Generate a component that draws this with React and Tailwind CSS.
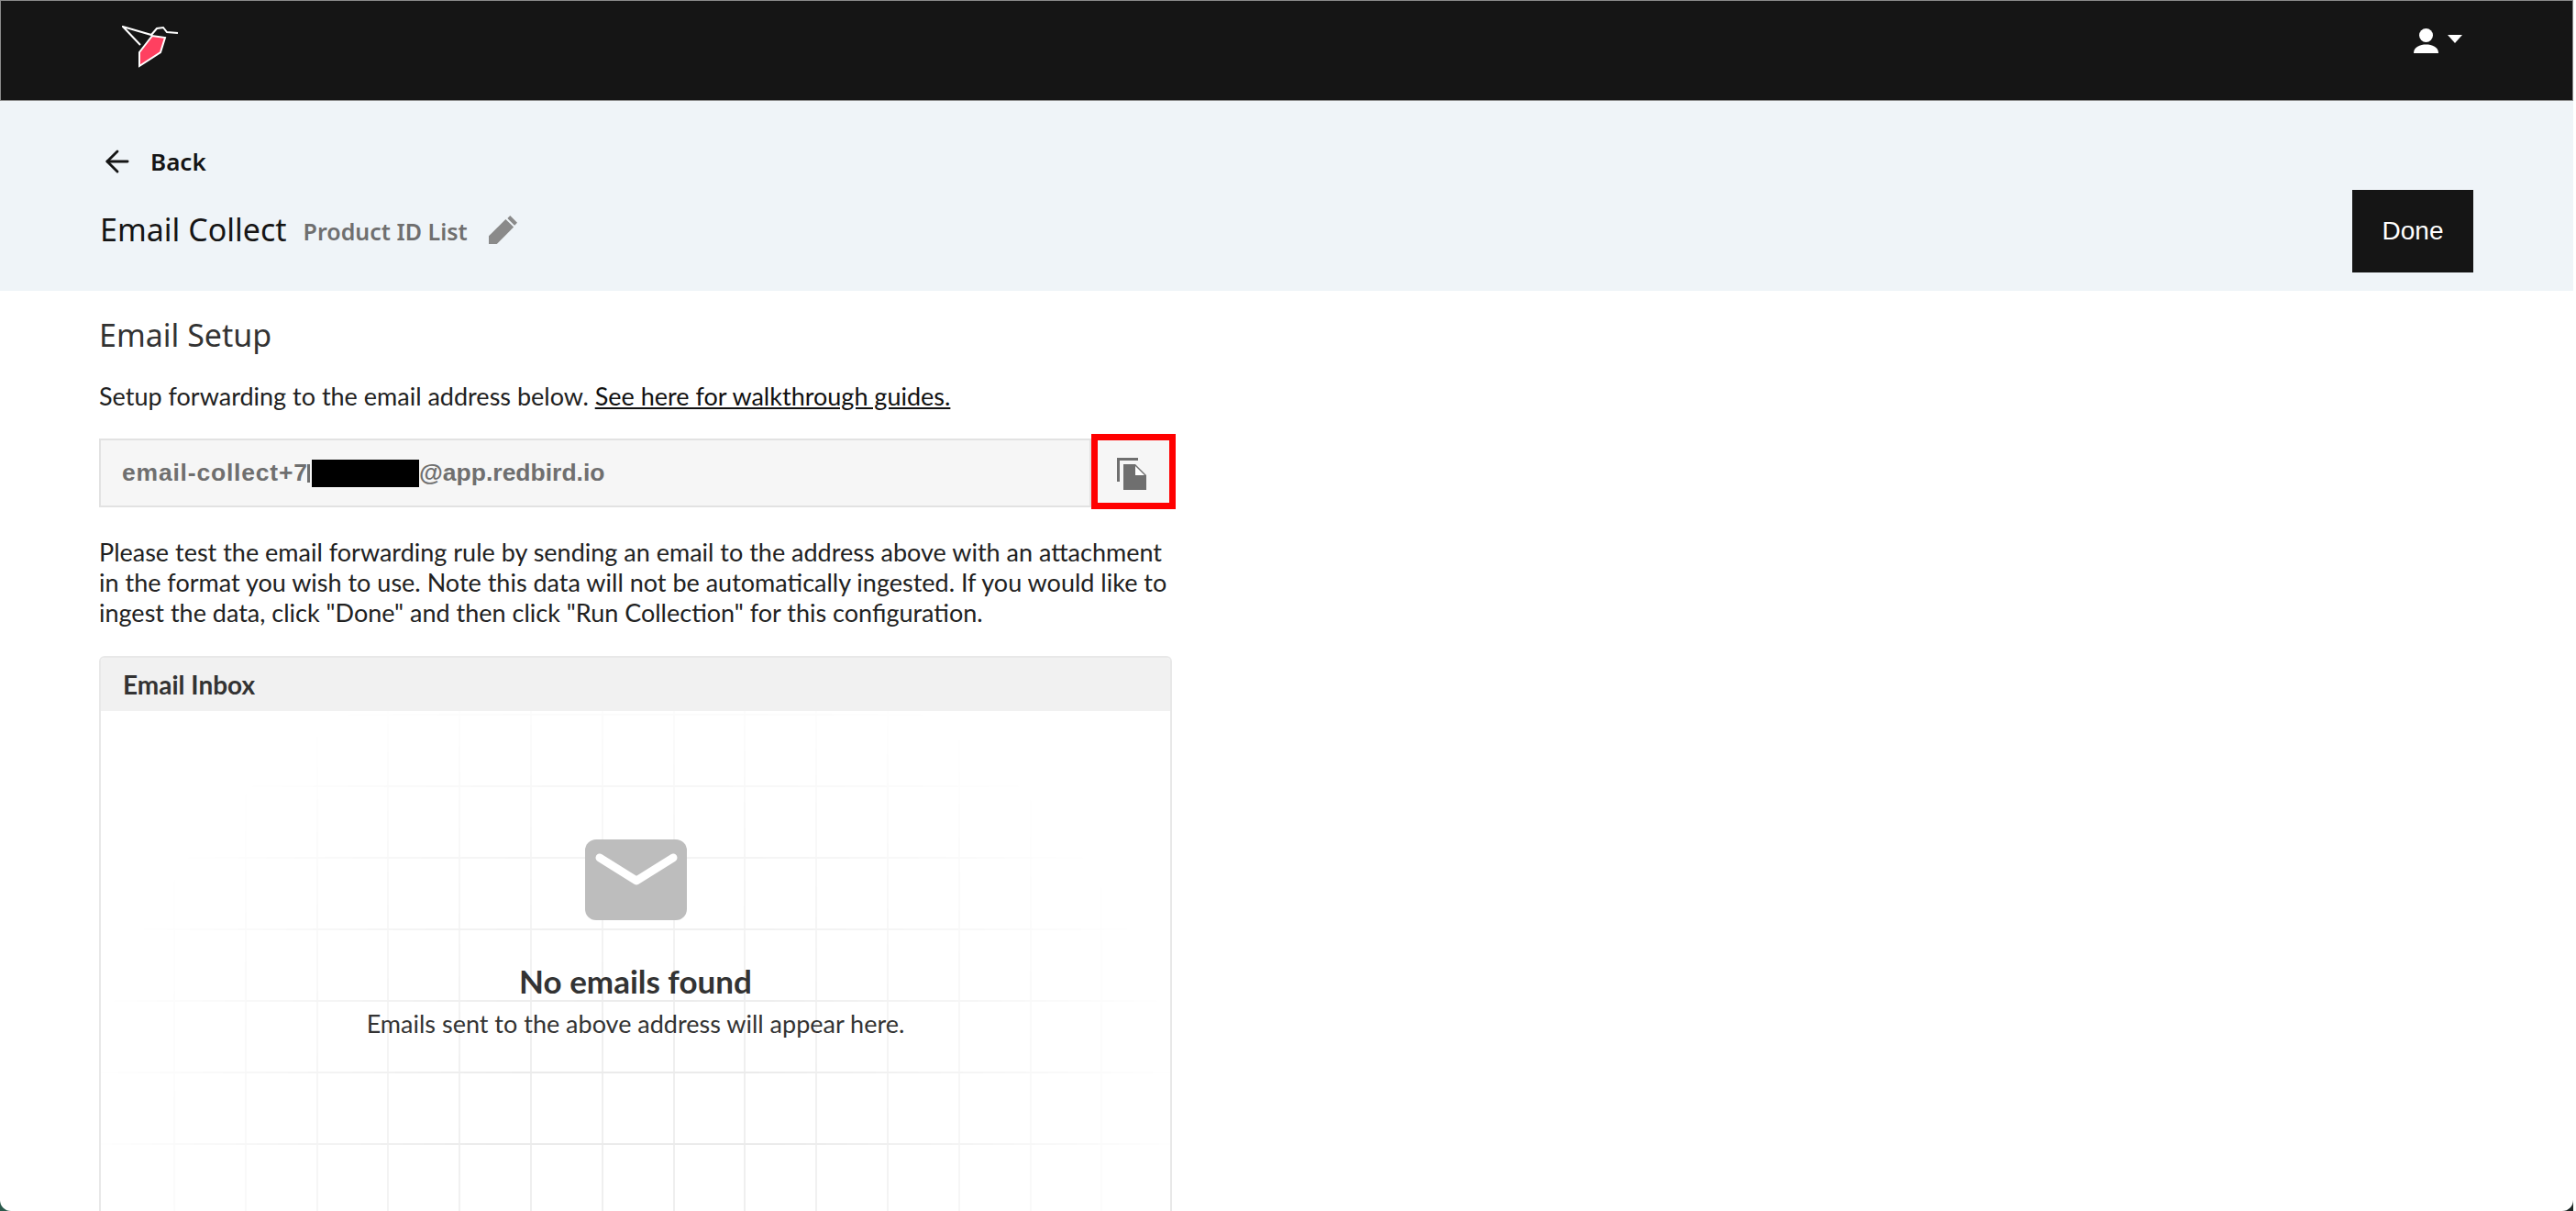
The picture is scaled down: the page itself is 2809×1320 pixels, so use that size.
import { ArrowLeft } from 'lucide-react';

const gridCols = Array.from({ length: 14 }, (_, i) => i);
const gridRows = Array.from({ length: 7 }, (_, i) => i);

function BirdLogo() {
    return (
        <svg width="62" height="46" viewBox="0 0 62 46" fill="none">
            <path d="M19 44 L19 29 L33 11 L47 13 L42 29 Z" fill="#ff4060" stroke="#fff" strokeWidth="2" />
            <path d="M20 21 L1 1 L32 10 L38 3 L45 2 L49 7 L61 8" stroke="#fff" strokeWidth="2" fill="none" />
        </svg>
    );
}

function CopyIcon() {
    return (
        <svg className="mr-[5px] mt-[4px]" width="32" height="35" viewBox="0 0 32 35">
            <path d="M0 0 H23 V3 H3 V26 H0 Z" fill="#6f6f6f" />
            <path d="M7 7 H20 L32 19 V35 H7 Z" fill="#6f6f6f" />
            <path d="M20 9 L30 19 H20 Z" fill="#fff" />
        </svg>
    );
}

function MailIcon() {
    return (
        <svg width="111" height="88" viewBox="0 0 111 88">
            <rect x="0" y="0" width="111" height="88" rx="12" fill="#bdbdbd" />
            <path d="M16 20 L56 45 L96 20" stroke="#fff" strokeWidth="9" strokeLinecap="round" strokeLinejoin="round" fill="none" />
        </svg>
    );
}

function GridBackdrop() {
    return (
        <div className="absolute inset-0 overflow-hidden [mask-image:radial-gradient(ellipse_52%_95%_at_50%_80%,black_25%,transparent_100%)]">
            <div className="absolute left-[79px] top-0 flex">
                {gridCols.map((i) => (
                    <div key={i} className="w-[77.8px] h-[600px] border-l-2 border-[#efefef]" />
                ))}
            </div>
            <div className="absolute left-0 right-0 top-[3px] flex flex-col">
                {gridRows.map((i) => (
                    <div key={i} className="h-[78px] border-t-2 border-[#ebebeb]" />
                ))}
            </div>
        </div>
    );
}

export default function App() {
    return (
        <div className="w-[2809px] h-[1320px] overflow-hidden bg-[linear-gradient(to_right,#2b5a4c_50%,#1c2624_50%,#1c2624_2806px,white_2806px)]">
            <div className="w-[2806px] h-[1320px] overflow-hidden rounded-b-[12px] bg-white font-['Lato',sans-serif] text-[#212121]">
                <nav className="h-[110px] bg-[#151515] border border-[#8a8a8a] flex items-start justify-between pl-[132px] pr-[120px]">
                    <div className="pt-[27px]">
                        <BirdLogo />
                    </div>
                    <div className="flex items-center gap-[10px] pt-[30px]">
                        <svg width="27" height="27" viewBox="0 0 27 27" fill="#fff">
                            <circle cx="13.5" cy="7.5" r="7.5" />
                            <path d="M0 27 C0 20 7 17.5 13.5 17.5 C20 17.5 27 20 27 27 Z" />
                        </svg>
                        <div className="mb-[4px] w-0 h-0 border-l-[8px] border-r-[8px] border-t-[9px] border-l-transparent border-r-transparent border-t-white" />
                    </div>
                </nav>

                <header className="h-[207px] bg-[#eff4f8] flex items-end justify-between pl-[108px] pr-[109px] pb-[20px]">
                    <div className="pb-[24px]">
                        <div className="flex items-center gap-[17px] h-[38px] pl-[1px] text-[#151515]">
                            <ArrowLeft size={38} strokeWidth={1.8} />
                            <span className="font-['Noto_Sans',sans-serif] text-[26px] font-semibold">Back</span>
                        </div>
                        <div className="flex items-center mt-[32px] pl-[1px]">
                            <span className="font-['Noto_Sans',sans-serif] text-[34px] leading-[46px] text-[#151515]">Email Collect</span>
                            <span className="ml-[18px] mt-[5px] font-['Noto_Sans',sans-serif] text-[25px] font-semibold text-[#6f6f6f]">Product ID List</span>
                            <svg className="ml-[23px]" width="31" height="31" viewBox="0 0 32 32" fill="#8a8a8a">
                                <path d="M0 32 V23 L19 4 L28 13 L9 32 Z" />
                                <path d="M21 3 L24 0 L32 8 L29 11 Z" />
                            </svg>
                        </div>
                    </div>
                    <button className="w-[132px] h-[90px] bg-[#151515] text-white text-[28px] font-['Liberation_Sans',sans-serif]">Done</button>
                </header>

                <main className="pl-[108px] w-[1282px]">
                    <h2 className="mt-[28px] font-['Noto_Sans',sans-serif] text-[34px] leading-[40px] text-[#333]">Email Setup</h2>
                    <p className="mt-[30px] text-[27px] leading-[33px]">
                        Setup forwarding to the email address below. <a className="underline text-[#111]">See here for walkthrough guides.</a>
                    </p>
                    <div className="mt-[30px] flex items-stretch h-[75px]">
                        <div className="flex-1 bg-[#f6f6f6] border-2 border-[#e2e2e2] flex items-center pl-[23px] font-['Liberation_Sans',sans-serif] font-bold text-[26.5px] text-[#6f6f6f]">
                            <span className="w-[202px] whitespace-nowrap tracking-[0.8px]">email-collect+7</span>
                            <span className="w-[5px] h-[20px] border-l-[3px] border-[#6f6f6f]" />
                            <span className="w-[117px] h-[30px] bg-black" />
                            <span>@app.redbird.io</span>
                        </div>
                        <div className="relative w-[92px]">
                            <div className="absolute left-0 right-0 -top-[5px] -bottom-[2px] border-[7px] border-[#ff0000] bg-[#f6f6f6] flex items-center justify-center">
                                <CopyIcon />
                            </div>
                        </div>
                    </div>
                    <p className="mt-[32px] text-[27px] leading-[33px] w-[1168px]">
                        Please test the email forwarding rule by sending an email to the address above with an attachment in the format you wish to use. Note this data will not be automatically ingested. If you would like to ingest the data, click "Done" and then click "Run Collection" for this configuration.
                    </p>
                    <section className="mt-[31px] w-[1170px] h-[700px] border-2 border-[#e8e8e8] rounded-[6px] overflow-hidden">
                        <div className="h-[58px] bg-[#f1f1f1] flex items-center pl-[24px] text-[28px] font-bold text-[#333]">Email Inbox</div>
                        <div className="relative h-[600px]">
                            <GridBackdrop />
                            <div className="relative flex flex-col items-center pt-[140px]">
                                <MailIcon />
                                <h3 className="mt-[44px] text-[35px] leading-[44px] font-bold text-[#333]">No emails found</h3>
                                <p className="mt-[8px] text-[27px] leading-[33px] text-[#333]">Emails sent to the above address will appear here.</p>
                            </div>
                        </div>
                    </section>
                </main>
            </div>
        </div>
    );
}
